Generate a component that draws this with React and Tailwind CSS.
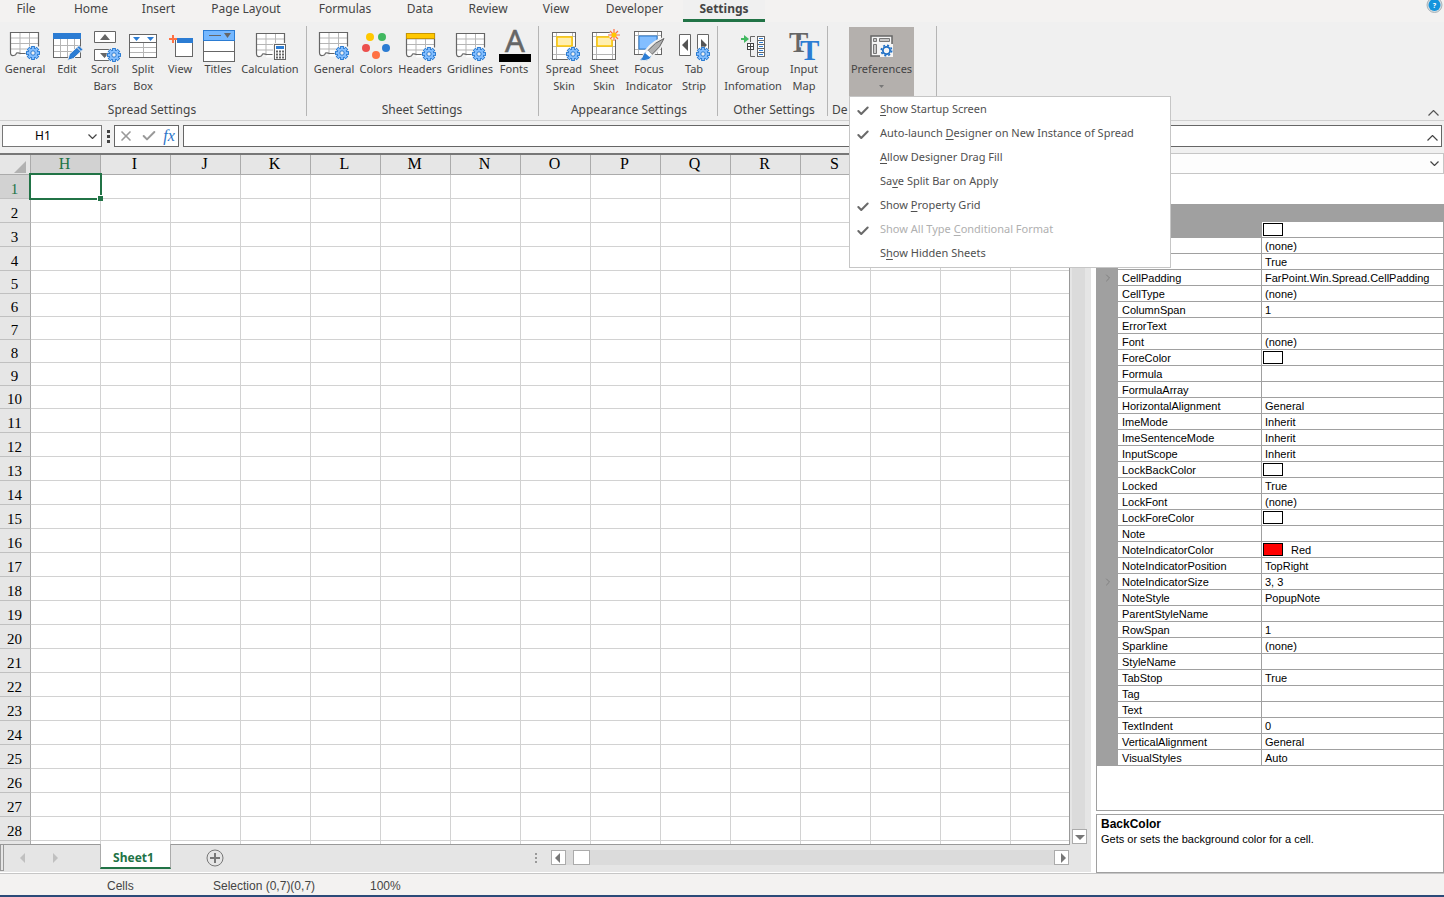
import { Check, ChevronRight, X } from 'lucide-react';

const Gear = ({ x, y }) => (
  <g transform={`translate(${x} ${y})`}>
    <circle r="7.5" fill="#f0f0f0" />
    {[0, 45, 90, 135].map((angle) => (
      <rect key={angle} x="-1.4" y="-6.5" width="2.8" height="13" fill="#83beff" stroke="#2b7cd3" transform={`rotate(${angle})`} />
    ))}
    <circle r="4.8" fill="#83beff" stroke="#2b7cd3" />
    {[0, 45, 90, 135].map((angle) => (
      <rect key={angle} x="-0.9" y="-6" width="1.8" height="12" fill="#83beff" transform={`rotate(${angle})`} />
    ))}
    <circle r="2.2" fill="#f0f0f0" stroke="#2b7cd3" />
  </g>
);

const TornSheet = ({ x = 5.5, y = 4.5, header }) => (
  <g transform={`translate(${x} ${y})`} fill="none">
    <path d="M0 0H28V24H10Q8 20 6 23L0 23Z" fill="#fff" />
    <path d="M0 5.5H28M0 11H28M0 16.5H28M9.5 0V22M19 0V22" stroke="#b5b5b5" />
    <path d="M28 14V0H0V20Q0 23.5 3 23Q5.5 23 6 20.5Q8 20 10 21H16" stroke="#666" strokeWidth="1.2" />
    {header && <path d="M0 0H28V5H0Z" fill="#ffc800" stroke="#c99700" />}
  </g>
);

const SkinSheet = () => (
  <>
    <rect x="8.5" y="4.5" width="23" height="27" fill="#fff" />
    <path d="M8 8.5H32M8 18.5H32M8 26.5H32M12.5 4V32M28.5 4V32" stroke="#b5b5b5" />
    <rect x="13" y="9" width="15" height="9" fill="#ffefb0" stroke="#ffc800" strokeWidth="1.5" />
    <rect x="8.5" y="4.5" width="23" height="27" fill="none" stroke="#666" />
  </>
);

const icons = {
  general: <><TornSheet /><Gear x={28} y={25} /></>,
  edit: (
    <>
      <rect x="6.5" y="5.5" width="27" height="24" fill="#fff" stroke="#666" />
      <path d="M7 17.5H33M7 23.5H33M13.5 10V29M20.5 10V29M27.5 10V29" stroke="#b5b5b5" />
      <rect x="6" y="5" width="28" height="6" fill="#2b7cd3" />
      <path d="M20.5 32.5L22.5 26L32 17.5L36 21.5L26.5 30.5Z" fill="#2b7cd3" stroke="#f0f0f0" />
      <path d="M30 19.5L34 23.5" stroke="#f0f0f0" />
    </>
  ),
  scrollBars: (
    <>
      <path d="M9.5 3.5H30.5V14.5H9.5ZM9.5 21.5H30.5V32.5H9.5Z" fill="#fff" stroke="#666" />
      <path d="M15 12H25L20 6ZM15 25H24L19.5 30Z" fill="#666" />
      <Gear x={29} y={27} />
    </>
  ),
  splitBox: (
    <>
      <rect x="6.5" y="6.5" width="27" height="23" fill="#fff" stroke="#666" />
      <path d="M7 19.5H33M7 24.5H33M20.5 15V29" stroke="#b5b5b5" />
      <path d="M7 14.5H33" stroke="#666" />
      <path d="M10 9H17L13.5 13ZM24 9H31L27.5 13Z" fill="#2b7cd3" />
    </>
  ),
  view: (
    <>
      <rect x="15.5" y="10.5" width="17" height="18" fill="#fff" stroke="#666" />
      <rect x="17" y="10" width="16" height="5" fill="#2b7cd3" />
      <path d="M13 7V15M9 11H17" stroke="#ff7143" strokeWidth="2" />
    </>
  ),
  titles: (
    <>
      <rect x="5.5" y="2.5" width="31" height="31" fill="#fff" stroke="#666" />
      <path d="M5 23.5H37" stroke="#666" />
      <rect x="5.5" y="2.5" width="31" height="10" fill="#75b8ff" stroke="#2b7cd3" />
      <path d="M11 7.5H23" stroke="#666" />
      <path d="M26 5H33L29.5 10Z" fill="#666" />
    </>
  ),
  calculation: (
    <>
      <TornSheet x={6.5} y={5.5} />
      <rect x="23" y="15" width="14" height="18" fill="#f0f0f0" />
      <rect x="24.5" y="16.5" width="11" height="15" fill="#fff" stroke="#666" />
      <rect x="26" y="18" width="8" height="3" fill="#2b7cd3" />
      <path d="M26 23.5H34M26 26.5H34M26 29.5H34" stroke="#666" strokeWidth="2" strokeDasharray="2 1" />
    </>
  ),
  colors: (
    <>
      <circle cx="14" cy="9" r="4" fill="#ffc800" />
      <circle cx="26" cy="9" r="4" fill="#41b860" />
      <circle cx="10" cy="20" r="4" fill="#ec504d" />
      <circle cx="30" cy="20" r="4" fill="#2b7cd3" />
      <circle cx="20" cy="27" r="4" fill="#ff7143" />
    </>
  ),
  headers: <><TornSheet x={6.5} y={5.5} header /><Gear x={29} y={26} /></>,
  gridlines: <><TornSheet x={6.5} y={5.5} /><Gear x={29} y={26} /></>,
  fonts: (
    <>
      <text x="21" y="24" fontSize="31" textAnchor="middle" fill="#666" stroke="#666" strokeWidth="0.6">A</text>
      <rect x="5" y="26" width="32" height="8" />
    </>
  ),
  spreadSkin: <><SkinSheet /><Gear x={29} y={26} /></>,
  sheetSkin: (
    <>
      <SkinSheet />
      <circle cx="30" cy="7" r="5" fill="#f0f0f0" />
      <path d="M30 1V13M24 7H36M26 3L34 11M34 3L26 11" stroke="#ff7143" strokeWidth="1.2" />
      <circle cx="30" cy="7" r="2.5" fill="#ffc800" />
    </>
  ),
  focus: (
    <>
      <rect x="5.5" y="3.5" width="27" height="23" fill="#fff" />
      <path d="M5 7.5H33M5 21.5H33M9.5 3V27M28.5 3V27" stroke="#b5b5b5" />
      <rect x="10" y="8" width="18" height="13" fill="#83beff" stroke="#2b7cd3" />
      <rect x="5.5" y="3.5" width="27" height="23" fill="none" stroke="#666" />
      <path d="M18 22Q25 13 35 10.5Q33 20 23 27Z" fill="#b0b0b0" stroke="#f0f0f0" strokeWidth="3" />
      <path d="M10 31.5Q14 30 14 27Q16 22 21 24Q24 28 20 31.5Q15 34 10 31.5Z" fill="#2b7cd3" stroke="#f0f0f0" />
      <path d="M19 22.5Q26 14 35 10.5Q32 19 23 26.5Z" fill="#b0b0b0" stroke="#666" />
      <path d="M16 25L19 22.5L23 26.5L20.5 29Z" fill="#fff" />
    </>
  ),
  tabStrip: (
    <>
      <path d="M5.5 6.5H16.5V27.5H5.5ZM23.5 6.5H34.5V27.5H23.5Z" fill="#fff" stroke="#666" />
      <path d="M14 11V23L8 17ZM27 11V23L33 17Z" fill="#555" />
      <Gear x={29} y={26} />
    </>
  ),
  group: (
    <>
      <path d="M8 10H11V7L16 11L11 15V12H8Z" fill="#41b860" />
      <path d="M22 8.5H17.5V14M17.5 22V28.5H22" fill="none" stroke="#666" />
      <rect x="14.5" y="15.5" width="6" height="6" fill="#fff" stroke="#444" />
      <path d="M15 18.5H20M17.5 16V21" stroke="#444" />
      <rect x="24.5" y="8.5" width="7" height="20" fill="#fff" stroke="#666" />
      <path d="M25 12.5H31M25 16.5H31M25 20.5H31M25 24.5H31" stroke="#666" />
      <path d="M26 10.5H30M26 14.5H30M26 18.5H30M26 22.5H30M26 26.5H30" stroke="#2b7cd3" />
    </>
  ),
  inputMap: (
    <g fontFamily="Liberation Serif, serif" fontWeight="bold">
      <text x="5" y="24" fontSize="29" fill="#666">T</text>
      <text x="16" y="32" fontSize="29" fill="#2b7cd3" stroke="#f0f0f0" strokeWidth="2" paintOrder="stroke">T</text>
    </g>
  ),
  preferences: (
    <>
      <rect x="9" y="8" width="21" height="20" fill="#f5f5f5" stroke="#666" strokeWidth="1.5" />
      <path d="M11.5 10.5H14.5V13.5H11.5ZM17.5 10.5H27.5V13.5H17.5ZM11.5 16.5H14.5V25.5H11.5Z" fill="#c8c8c8" stroke="#777" />
      <rect x="18" y="16" width="13" height="13" fill="#f5f5f5" />
      <circle cx="24.5" cy="22.5" r="3.6" fill="none" stroke="#1f6fc5" strokeWidth="1.8" />
      <circle cx="24.5" cy="22.5" r="5.2" fill="none" stroke="#1f6fc5" strokeWidth="1.6" strokeDasharray="2.04 2.04" />
    </>
  ),
};

const Icon = ({ name }) => (
  <svg viewBox="0 0 40 33" className="-mb-px h-[33px] w-10 shrink-0 overflow-visible" aria-hidden="true">
    {icons[name]}
  </svg>
);

const ChevronUp = () => (
  <svg viewBox="0 0 11 6" className="h-1.5 w-[11px]" fill="none" stroke="currentColor" strokeWidth="1.2">
    <path d="M0.5 5.5L5.5 0.5L10.5 5.5" />
  </svg>
);

const ChevronDown = () => (
  <svg viewBox="0 0 9 5" className="h-[5px] w-[9px]" fill="none" stroke="currentColor" strokeWidth="1.2">
    <path d="M0.5 0.5L4.5 4.5L8.5 0.5" />
  </svg>
);

const tabs = [
  ['File', 'w-[52px]'],
  ['Home', 'w-[78px]'],
  ['Insert', 'w-[57px]'],
  ['Page Layout', 'w-[118px]'],
  ['Formulas', 'w-20'],
  ['Data', 'w-[70px]'],
  ['Review', 'w-[66px]'],
  ['View', 'w-[70px]'],
  ['Developer', 'w-[87px]'],
];

const groups = [
  {
    title: 'Spread Settings',
    pad: 'pl-0.5 pr-1',
    items: [
      ['general', ['General'], 'w-[46px]'],
      ['edit', ['Edit'], 'w-[38px]'],
      ['scrollBars', ['Scroll', 'Bars'], 'w-[38px]'],
      ['splitBox', ['Split', 'Box'], 'w-[38px]'],
      ['view', ['View'], 'w-9'],
      ['titles', ['Titles'], 'w-10'],
      ['calculation', ['Calculation'], 'w-16'],
    ],
  },
  {
    title: 'Sheet Settings',
    pad: 'pl-[5px] pr-1.5',
    items: [
      ['general', ['General'], 'w-11'],
      ['colors', ['Colors'], 'w-10'],
      ['headers', ['Headers'], 'w-12'],
      ['gridlines', ['Gridlines'], 'w-[52px]'],
      ['fonts', ['Fonts'], 'w-9'],
    ],
  },
  {
    title: 'Appearance Settings',
    pad: 'pl-[5px] pr-[3px]',
    items: [
      ['spreadSkin', ['Spread', 'Skin'], 'w-10'],
      ['sheetSkin', ['Sheet', 'Skin'], 'w-10'],
      ['focus', ['Focus', 'Indicator'], 'w-[50px]'],
      ['tabStrip', ['Tab', 'Strip'], 'w-10'],
    ],
  },
  {
    title: 'Other Settings',
    pad: 'pl-[5px] pr-0.5',
    items: [
      ['group', ['Group', 'Infomation'], 'w-[60px]'],
      ['inputMap', ['Input', 'Map'], 'w-[42px]'],
    ],
  },
];

// [before, access key, after, checked, disabled]
const menuItems = [
  ['', 'S', 'how Startup Screen', true],
  ['Auto-launch ', 'D', 'esigner on New Instance of Spread', true],
  ['', 'A', 'llow Designer Drag Fill'],
  ['Sa', 'v', 'e Split Bar on Apply'],
  ['Show ', 'P', 'roperty Grid', true],
  ['Show All Type ', 'C', 'onditional Format', true, true],
  ['S', 'h', 'ow Hidden Sheets'],
];

// the last columns sit behind the open menu
const columns = [...'HIJKLMNOPQRS', '', '', ''];
const rows = Array.from({ length: 29 }, (_, i) => i + 1);

const properties = [
  ['', '(none)'],
  ['', 'True'],
  ['CellPadding', 'FarPoint.Win.Spread.CellPadding'],
  ['CellType', '(none)'],
  ['ColumnSpan', '1'],
  ['ErrorText', ''],
  ['Font', '(none)'],
  ['ForeColor', '', 'bg-white'],
  ['Formula', ''],
  ['FormulaArray', ''],
  ['HorizontalAlignment', 'General'],
  ['ImeMode', 'Inherit'],
  ['ImeSentenceMode', 'Inherit'],
  ['InputScope', 'Inherit'],
  ['LockBackColor', '', 'bg-white'],
  ['Locked', 'True'],
  ['LockFont', '(none)'],
  ['LockForeColor', '', 'bg-white'],
  ['Note', ''],
  ['NoteIndicatorColor', 'Red', 'bg-[#ff0000]'],
  ['NoteIndicatorPosition', 'TopRight'],
  ['NoteIndicatorSize', '3, 3'],
  ['NoteStyle', 'PopupNote'],
  ['ParentStyleName', ''],
  ['RowSpan', '1'],
  ['Sparkline', '(none)'],
  ['StyleName', ''],
  ['TabStop', 'True'],
  ['Tag', ''],
  ['Text', ''],
  ['TextIndent', '0'],
  ['VerticalAlignment', 'General'],
  ['VisualStyles', 'Auto'],
];

const expandable = ['CellPadding', 'NoteIndicatorSize'];

const Tabs = () => (
  <nav className="flex h-[22px] bg-[#f3f2f1] text-[12px]">
    {tabs.map(([name, width]) => (
      <button key={name} className={`${width} h-[18px] text-center leading-[18px] whitespace-nowrap`}>
        {name}
      </button>
    ))}
    <button className="ml-[5px] w-[82px] border-b-3 border-[#217346] bg-[#f0f0f0] pb-px text-center leading-[18px] font-bold">
      Settings
    </button>
    <button aria-label="Help" className="ml-auto h-3.5 w-[18px]">
      <svg viewBox="0 2 18 14" className="h-3.5 w-[18px]">
        <circle cx="8.5" cy="7" r="7.5" fill="#d5dce0" stroke="#a9b4ba" />
        <circle cx="8.5" cy="7" r="6" fill="#1394dc" />
        <text x="8.5" y="10" fontSize="7" fontWeight="bold" textAnchor="middle" fill="#fff">?</text>
      </svg>
    </button>
  </nav>
);

const PreferencesMenu = () => (
  <div role="menu" className="absolute top-full left-0 z-20 w-[322px] border border-[#c6c6c6] bg-white pb-0.5">
    {menuItems.map(([before, key, after, checked, disabled]) => (
      <button
        key={before + key + after}
        role="menuitemcheckbox"
        aria-checked={!!checked}
        disabled={disabled}
        className={`flex h-6 w-full items-center pl-1.5 text-left whitespace-nowrap ${disabled ? 'text-[#b0b0b0]' : 'text-[#505050]'}`}
      >
        <span className="w-6 text-[#6a6a6a]">
          {checked && <Check className="mt-1 size-3.5" strokeWidth={3.5} />}
        </span>
        <span>
          {before}
          <span className="underline underline-offset-2">{key}</span>
          {after}
        </span>
      </button>
    ))}
  </div>
);

const Ribbon = () => (
  <div className="flex border-b border-[#d0d0d0] pt-1 pb-1 text-[11px]">
    {groups.map(({ title, pad, items }) => (
      <section key={title} className={`${pad} shrink-0 border-r border-[#b5b5b5] pt-px`}>
        <div className="flex h-[69px]">
          {items.map(([icon, lines, width]) => (
            <button key={icon} className={`${width} flex shrink-0 flex-col items-center pt-px leading-[17px] whitespace-nowrap`}>
              <Icon name={icon} />
              {lines.map((line) => (
                <span key={line}>{line}</span>
              ))}
            </button>
          ))}
        </div>
        <h2 className="mt-2 text-center text-[12px] leading-3 whitespace-nowrap">{title}</h2>
      </section>
    ))}
    <section className="w-[109px] shrink-0 border-r border-[#b5b5b5] pt-px">
      <div className="relative ml-[21px] w-[65px]">
        <button aria-haspopup="menu" aria-expanded="true" className="flex h-[69px] w-full flex-col items-center bg-[#b4b0ad] pt-px leading-[17px]">
          <Icon name="preferences" />
          <span>Preferences</span>
          <svg viewBox="0 0 5 3" className="mt-2 h-[3px] w-[5px]">
            <path d="M0 0H5L2.5 3Z" fill="#777" />
          </svg>
        </button>
        <PreferencesMenu />
      </div>
      <h2 className="mt-2 pl-1 text-[12px] leading-3">De</h2>
    </section>
    <button aria-label="Collapse ribbon" className="mr-[5px] ml-auto self-end text-[#555]">
      <ChevronUp />
    </button>
  </div>
);

const FormulaBar = () => (
  <div className="flex h-8 items-start pt-1 pr-0.5 pl-0.5">
    <div className="flex h-[22px] w-[100px] items-center border border-[#777] bg-white">
      <input aria-label="Name box" defaultValue="H1" className="w-20 text-center text-[12px] text-black outline-none" />
      <button aria-label="Open name list" className="flex w-[18px] justify-center">
        <ChevronDown />
      </button>
    </div>
    <div className="mt-[5px] ml-[5px] flex w-[7px] flex-col gap-0.5">
      <i className="size-[3px] bg-[#444]" />
      <i className="size-[3px] bg-[#444]" />
      <i className="size-[3px] bg-[#444]" />
    </div>
    <div className="flex h-[22px] w-[65px] items-center justify-around border border-[#666] bg-white text-[#999]">
      <button aria-label="Cancel"><X className="size-4" strokeWidth={2.5} /></button>
      <button aria-label="Enter"><Check className="size-4" strokeWidth={3} /></button>
      <button className="font-['Liberation_Serif',serif] text-[16px] leading-5 text-[#2b74c8] italic">fx</button>
    </div>
    <div className="ml-1 flex h-[22px] flex-1 items-center border border-[#666] bg-white">
      <input aria-label="Formula" className="min-w-0 flex-1 px-1 outline-none" />
      <button aria-label="Collapse formula bar" className="mt-1 mr-[3px]">
        <ChevronUp />
      </button>
    </div>
  </div>
);

const Grid = () => (
  <table className="w-[1081px] table-fixed border-separate border-spacing-0 font-['Liberation_Serif',serif] text-black">
    <thead>
      <tr className="h-5 bg-[#e6e6e6] text-[16px] leading-[18px]">
        <th className="w-[31px] border-r border-b border-[#ababab] p-0">
          <svg viewBox="0 0 12 12" className="mt-1 ml-3.5 size-3">
            <path d="M12 0V12H0Z" fill="#b2b2b2" />
          </svg>
        </th>
        {columns.map((column, i) => (
          <th
            key={i}
            className={`w-[70px] border-r border-b border-[#ababab] p-0 pr-0.5 pb-px font-normal ${i === 0 ? 'bg-[#d2d2d2] text-[#217346]' : ''}`}
          >
            {column}
          </th>
        ))}
      </tr>
    </thead>
    <tbody>
      {rows.map((row) => (
        <tr key={row} className={row > 4 && row < 11 ? 'h-[23px]' : 'h-6'}>
          <th
            className={`border-r border-b border-r-[#ababab] border-b-[#c0c0c0] p-0 pt-1 pr-px text-[15px] leading-[18px] font-normal ${row === 1 ? 'bg-[#d2d2d2] text-[#217346]' : 'bg-[#e6e6e6]'}`}
          >
            {row < 29 && row}
          </th>
          {columns.map((column, i) => (
            <td key={i} className="relative border-r border-b border-[#d2d2d2] p-0">
              {row === 1 && i === 0 && (
                <div className="absolute -inset-0.5 z-10 border-2 border-[#217346]">
                  <i className="absolute -right-[3px] -bottom-[3px] size-1.5 border-t border-l border-white bg-[#217346]" />
                </div>
              )}
            </td>
          ))}
        </tr>
      ))}
    </tbody>
  </table>
);

const arrows = {
  left: 'M7 1V11L2 6Z',
  right: 'M5 1V11L10 6Z',
  down: 'M1 4H11L6 9Z',
};

const Arrow = ({ direction }) => (
  <svg viewBox="0 0 12 12" className="size-3">
    <path d={arrows[direction]} fill="currentColor" />
  </svg>
);

const Sheet = () => (
  <section className="flex min-w-0 flex-1 flex-col bg-[#e5e5e5]">
    <div className="flex min-h-0 flex-1 border-t-2 border-[#777]">
      <div className="min-w-0 flex-1 overflow-hidden border-r border-b border-[#999] bg-white">
        <Grid />
      </div>
      <div className="flex w-[21px] flex-col pr-1.5 pl-0.5">
        <div className="flex-1 bg-[#dbdbdb]" />
        <button aria-label="Scroll down" className="mb-px flex h-[15px] w-[15px] items-center justify-center border border-[#ababab] bg-white text-[#777]">
          <Arrow direction="down" />
        </button>
      </div>
    </div>
    <div className="flex h-7 border-b border-white">
      <div className="h-[26px] w-1 border border-t-0 border-[#999]" />
      <button aria-label="Previous sheet" className="ml-3.5 pb-0.5 text-[#c0c0c0]"><Arrow direction="left" /></button>
      <button aria-label="Next sheet" className="ml-[18px] pb-0.5 text-[#c0c0c0]"><Arrow direction="right" /></button>
      <button className="-mt-px ml-10 h-[25px] w-[71px] border-x border-b-2 border-x-[#ababab] border-b-[#217346] bg-white pt-1 pr-1 text-[12px] font-bold text-[#217346]">
        Sheet1
      </button>
      <button aria-label="Add sheet" className="ml-[35px] pb-0.5">
        <svg viewBox="0 0 18 18" className="size-[18px]" fill="none" stroke="#777">
          <circle cx="9" cy="9" r="8" />
          <path d="M9 4V14M4 9H14" strokeWidth="2" />
        </svg>
      </button>
      <div className="ml-auto flex w-[556px] min-w-0 items-center pb-0.5">
        <div className="flex w-4 flex-col gap-0.5">
          <i className="size-0.5 bg-[#999]" />
          <i className="size-0.5 bg-[#999]" />
          <i className="size-0.5 bg-[#999]" />
        </div>
        <div className="flex h-[15px] w-[518px] bg-[#dbdbdb]">
          <button aria-label="Scroll left" className="flex w-[15px] items-center justify-center border border-[#ababab] bg-white text-[#777]">
            <Arrow direction="left" />
          </button>
          <div className="ml-[7px] w-[17px] border border-[#ababab] bg-white" />
          <button aria-label="Scroll right" className="ml-auto flex w-[15px] items-center justify-center border border-[#ababab] bg-white text-[#777]">
            <Arrow direction="right" />
          </button>
        </div>
      </div>
    </div>
  </section>
);

const Swatch = ({ color }) => <i className={`${color} mr-2 -ml-0.5 inline-block h-[13px] w-5 border border-black align-top`} />;

const PropertyPanel = () => (
  <aside className="ml-[5px] flex w-[348px] shrink-0 flex-col font-['Liberation_Sans',sans-serif] text-[11px] text-black">
    <div className="relative">
      <select aria-label="Selected object" className="h-[21px] w-full appearance-none border border-[#c6c6c6] bg-[#fdfdfd]">
        <option></option>
      </select>
      <span className="pointer-events-none absolute top-2 right-[5px] text-[#444]">
        <ChevronDown />
      </span>
    </div>
    <div className="mt-[30px] min-h-0 flex-1 border border-t-0 border-[#a0a0a0]">
      <table className="w-full table-fixed border-separate border-spacing-0">
        <tbody>
          <tr className="h-[18px]">
            <td className="w-[21px] bg-[#a0a0a0] p-0" />
            <td className="w-36 bg-[#a0a0a0] p-0" />
            <td className="bg-[#a0a0a0] p-0" />
          </tr>
          <tr className="h-4">
            <td className="bg-[#a0a0a0] p-0" />
            <td className="bg-[#a0a0a0] p-0" />
            <td className="border-b border-[#a0a0a0] p-0 px-[3px] pt-px leading-[14px]"><Swatch color="bg-white" /></td>
          </tr>
          {properties.map(([name, value, color], i) => (
            <tr key={i} className="h-4 leading-[14px] whitespace-nowrap">
              <td className="bg-[#a0a0a0] p-0 text-[#808080]">
                {expandable.includes(name) && <ChevronRight className="mx-auto size-3" />}
              </td>
              <td className="border-r border-b border-[#a0a0a0] p-0 pt-px pl-1">{name}</td>
              <td className="border-b border-[#a0a0a0] p-0 pt-px pl-[3px]">
                {color && <Swatch color={color} />}
                {value}
              </td>
            </tr>
          ))}
        </tbody>
      </table>
    </div>
    <div className="mt-[3px] h-[59px] border border-[#a0a0a0] px-1 pt-0.5 leading-[15px]">
      <h3 className="text-[12px] font-bold">BackColor</h3>
      <p>Gets or sets the background color for a cell.</p>
    </div>
  </aside>
);

export default function App() {
  return (
    <div className="flex h-screen flex-col overflow-hidden bg-[#f0f0f0] font-['Noto_Sans',sans-serif] text-[#444]">
      <Tabs />
      <Ribbon />
      <FormulaBar />
      <main className="flex min-h-0 flex-1 bg-white">
        <Sheet />
        <PropertyPanel />
      </main>
      <footer className="flex h-6 shrink-0 items-center border-t border-b-2 border-t-[#c6c6c6] border-b-[#2b4a78] bg-[#f3f2f1] pt-0.5 pl-[107px] font-['Liberation_Sans',sans-serif] text-[12px]">
        <span className="w-[106px]">Cells</span>
        <span className="w-[157px]">Selection (0,7)(0,7)</span>
        <span>100%</span>
      </footer>
    </div>
  );
}
